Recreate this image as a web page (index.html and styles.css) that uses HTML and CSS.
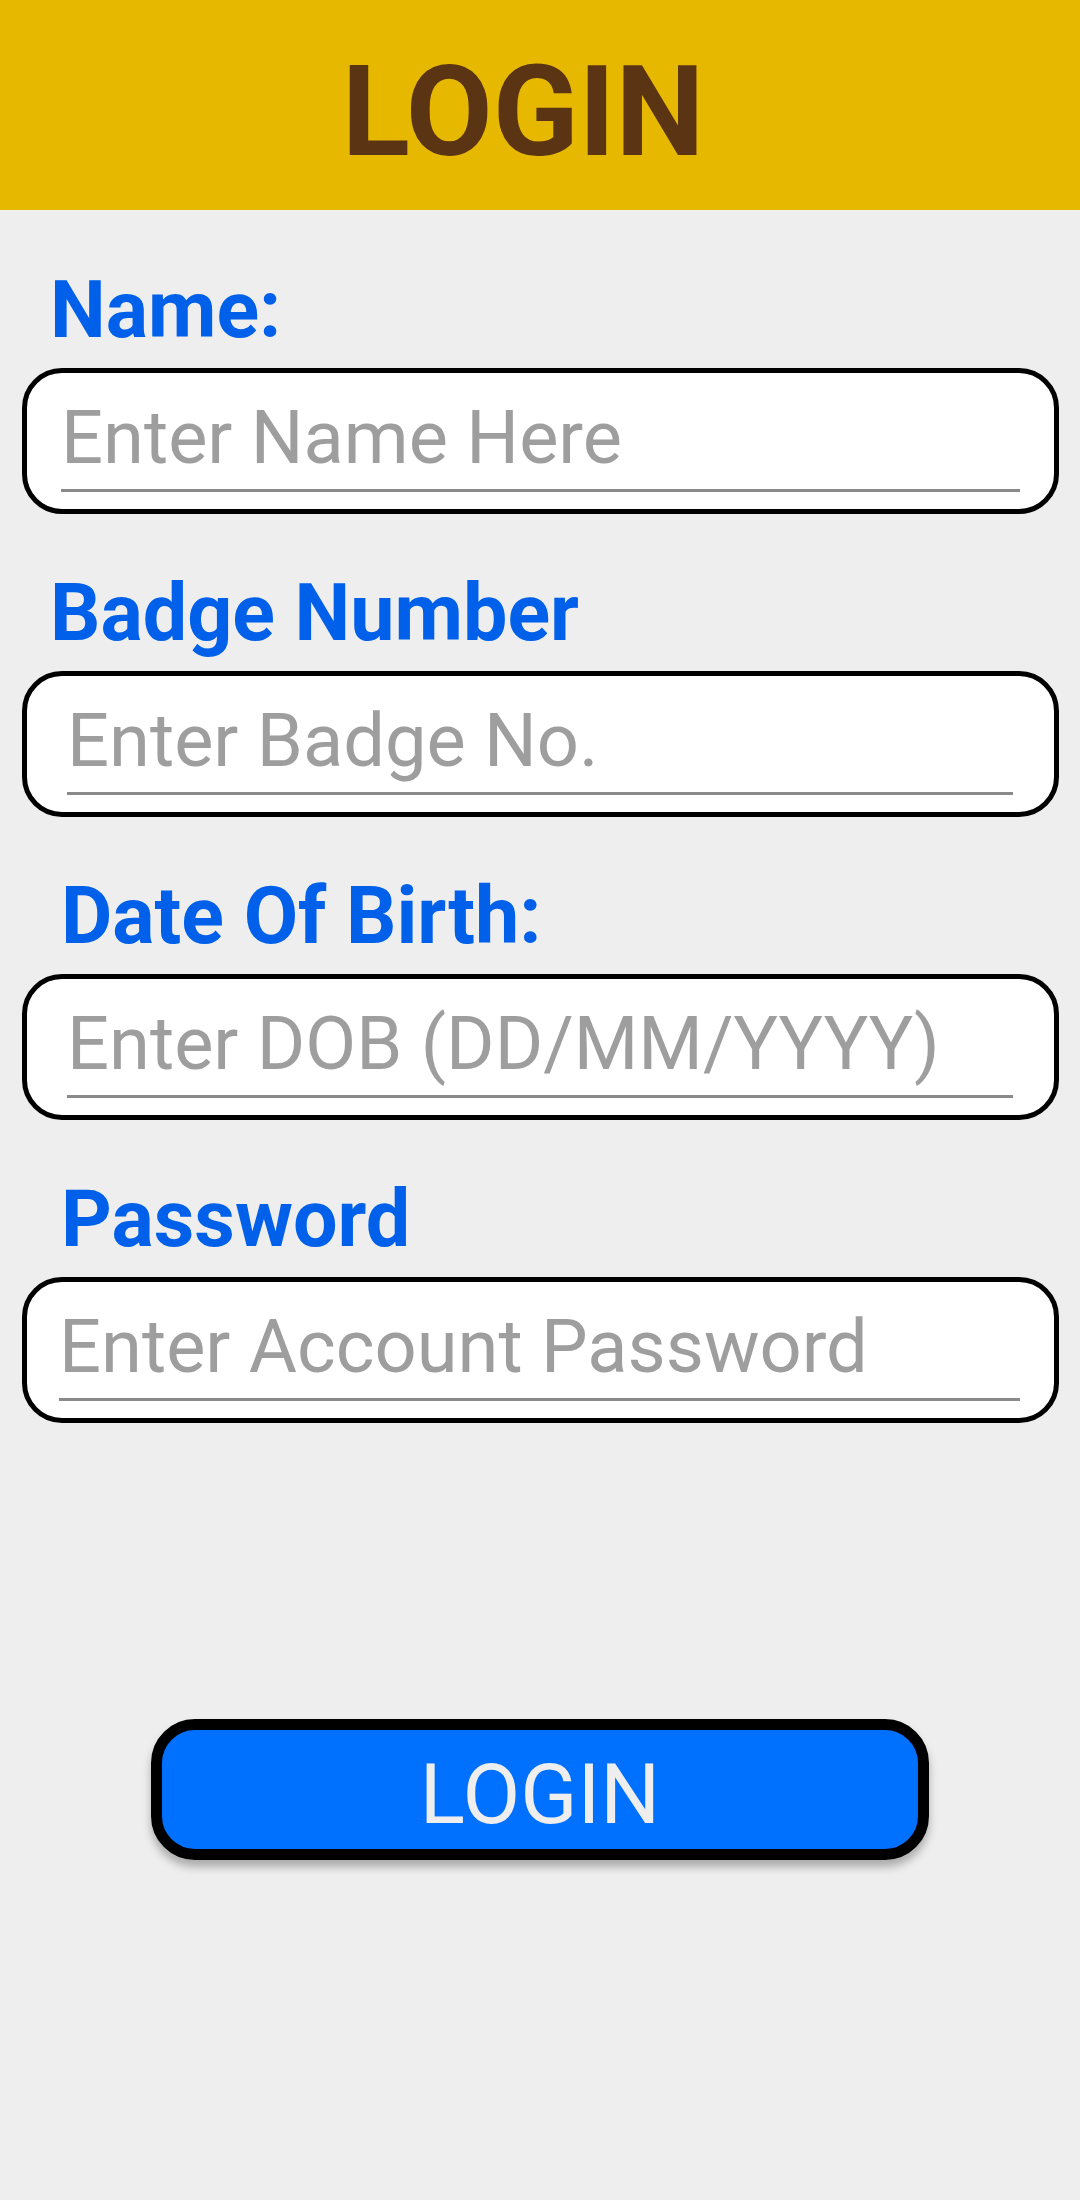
FILE: index.html
```html
<!DOCTYPE html>
<html lang="en">
<head>
<meta charset="utf-8">
<title>Login</title>
<link rel="stylesheet" href="styles.css">
</head>
<body>
  <header class="topbar">
    <h1 class="topbar-title">LOGIN</h1>
  </header>
  <main class="form">
    <div class="field field-first">
      <div class="label label-a">Name:</div>
      <div class="box">
        <div class="edit edit-1">Enter Name Here</div>
      </div>
    </div>
    <div class="field">
      <div class="label label-a">Badge Number</div>
      <div class="box">
        <div class="edit edit-2">Enter Badge No.</div>
      </div>
    </div>
    <div class="field">
      <div class="label label-b">Date Of Birth:</div>
      <div class="box">
        <div class="edit edit-2">Enter DOB (DD/MM/YYYY)</div>
      </div>
    </div>
    <div class="field">
      <div class="label label-b">Password</div>
      <div class="box">
        <div class="edit edit-4">Enter Account Password</div>
      </div>
    </div>
    <div class="actions">
      <button class="login-btn" type="button">LOGIN</button>
    </div>
  </main>
</body>
</html>
```

FILE: styles.css
```css
html, body {
  margin: 0;
  padding: 0;
}
body {
  background: #eeeeee;
  font-family: Roboto, "Noto Sans", "Liberation Sans", sans-serif;
  width: 1080px;
  min-height: 2200px;
}
.topbar {
  box-sizing: border-box;
  height: 210px;
  background: #e6b800;
  display: flex;
  justify-content: center;
  align-items: flex-start;
  padding-top: 38px;
  padding-right: 34px;
}
.topbar-title {
  margin: 0;
  font-size: 126px;
  font-weight: 700;
  line-height: normal;
  color: #5b3413;
}
.form {
  display: flex;
  flex-direction: column;
}
.field {
  display: flex;
  flex-direction: column;
}
.label {
  margin-top: 53px;
  font-size: 79px;
  font-weight: 700;
  line-height: normal;
  color: #0160ea;
}
.field-first .label {
  margin-top: 54px;
}
.label-a {
  margin-left: 50px;
}
.label-b {
  margin-left: 61px;
}
.box {
  box-sizing: border-box;
  height: 146px;
  margin: 12px 21px 0 22px;
  background: #ffffff;
  border: 5px solid #000000;
  border-radius: 40px;
  padding-top: 21px;
}
.edit {
  font-size: 74px;
  line-height: normal;
  color: #9e9e9e;
  padding-bottom: 8px;
  border-bottom: 3px solid #8a8a8a;
  white-space: nowrap;
}
.edit-1 {
  margin: 0 34px 0 34px;
}
.edit-2 {
  margin: 0 41px 0 40px;
}
.edit-4 {
  margin: 0 34px 0 32px;
}
.actions {
  display: flex;
  justify-content: center;
  margin-top: 296px;
}
.login-btn {
  box-sizing: border-box;
  width: 778px;
  height: 141px;
  background: #0070ff;
  border: 11px solid #000000;
  border-radius: 44px;
  box-shadow: 0 7px 9px rgba(0, 0, 0, 0.28);
  color: #eeeeee;
  font-family: Roboto, "Noto Sans", "Liberation Sans", sans-serif;
  font-size: 84px;
  font-weight: 400;
  line-height: normal;
  padding: 10px 0 0 0;
  display: flex;
  align-items: center;
  justify-content: center;
}
```
